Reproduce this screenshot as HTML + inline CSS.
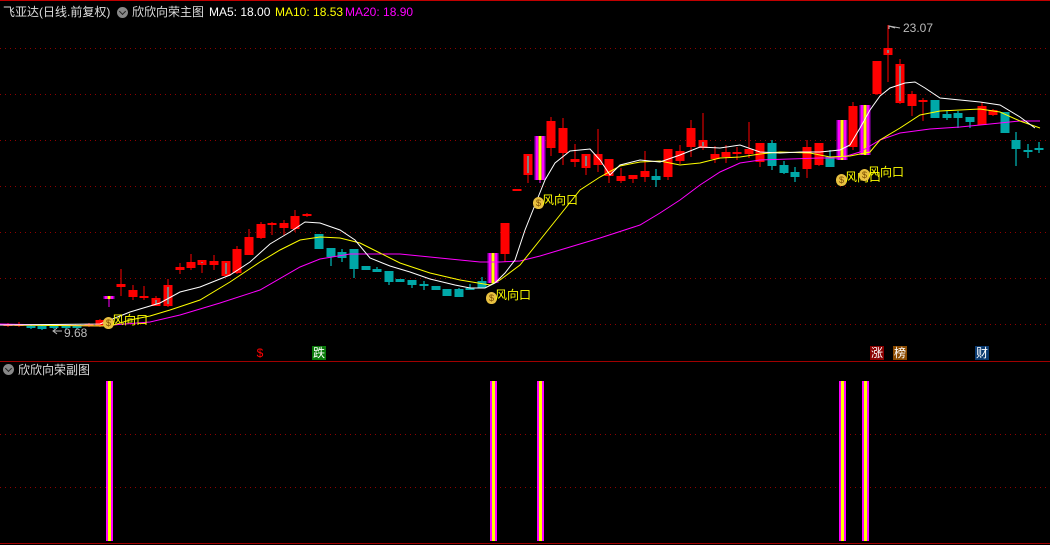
<!DOCTYPE html>
<html><head><meta charset="utf-8"><style>
html,body{margin:0;padding:0;background:#000;width:1050px;height:545px;overflow:hidden}
body{position:relative;font-family:"Liberation Sans","Noto Sans CJK SC",sans-serif}
.t{position:absolute;font-size:12px;line-height:14px;white-space:nowrap}
.ic{position:absolute;width:11px;height:11px;border-radius:50%;background:#888}
.ic:after{content:"";position:absolute;left:3px;top:2px;width:4px;height:4px;border-right:1.5px solid #222;border-bottom:1.5px solid #222;transform:rotate(45deg)}
.fx{position:absolute;font-size:12px;color:#ff0;line-height:13px;white-space:nowrap}
.bag{display:inline-block;width:11px;height:12px;border-radius:50% 50% 45% 45%;background:#e8c040;color:#7a4b00;font-size:9px;text-align:center;line-height:13px;vertical-align:-2px;margin-right:-2px}
.mk{position:absolute;font-size:12px;line-height:14px;width:14px;text-align:center}
</style></head><body>
<svg id="s" width="1050" height="545" style="position:absolute;left:0;top:0">
<line x1="0" y1="0.5" x2="1050" y2="0.5" stroke="#c00000"/>
<line x1="0" y1="361.5" x2="1050" y2="361.5" stroke="#a00000"/>
<line x1="0" y1="543.5" x2="1050" y2="543.5" stroke="#a00000"/>
<g stroke="#900000" stroke-dasharray="1 4">
<line x1="0" y1="48.5" x2="1050" y2="48.5"/><line x1="0" y1="94.5" x2="1050" y2="94.5"/>
<line x1="0" y1="140.5" x2="1050" y2="140.5"/><line x1="0" y1="186.5" x2="1050" y2="186.5"/>
<line x1="0" y1="232.5" x2="1050" y2="232.5"/><line x1="0" y1="278.5" x2="1050" y2="278.5"/>
<line x1="0" y1="324.5" x2="1050" y2="324.5"/>
<line x1="0" y1="434.5" x2="1050" y2="434.5"/><line x1="0" y1="487.5" x2="1050" y2="487.5"/>
</g>
<g id="c"></g>
<polyline fill="none" stroke="#ff00ff" stroke-width="1" points="0,324 100,326 150,322 180,315 220,303 260,290 300,267 320,259 350,254 400,254 440,258 480,262 500,262 520,261 540,256 560,250 600,238 640,225 660,213 680,200 700,185 720,172 740,163 760,160 790,159 820,158 840,158 860,152 880,140 900,133 930,129 960,127 990,124 1020,121 1040,121"/>
<polyline fill="none" stroke="#ffff00" stroke-width="1" points="0,325 110,326 130,320 150,316 170,310 200,300 230,282 260,262 280,250 300,240 320,237 340,238 360,243 380,253 400,263 430,273 460,280 490,285 500,280 520,265 540,240 560,215 580,190 600,177 620,166 640,162 660,161 680,165 700,163 720,158 740,157 760,154 780,152 810,153 830,157 850,156 870,152 880,140 900,128 920,115 940,111 960,110 980,109 1000,112 1020,121 1040,128"/>
<polyline fill="none" stroke="#ffffff" stroke-width="1" points="0,325 100,324 115,318 130,312 160,303 180,292 200,287 230,275 250,262 270,244 290,232 305,222 320,223 340,230 355,240 370,258 390,266 410,272 430,279 455,285 470,288 485,288 495,283 505,273 515,260 525,230 535,205 545,180 555,163 570,151 590,149 600,160 610,175 620,165 640,160 660,162 680,155 700,147 720,148 740,145 760,152 780,153 800,152 820,152 840,150 850,145 860,128 870,110 880,96 890,88 905,83 915,82 925,88 940,98 960,100 980,102 1000,105 1020,117 1035,128"/>
<g>
<rect x="106" y="381" width="2" height="160" fill="#f0f"/><rect x="108" y="381" width="3" height="160" fill="#ff0"/><rect x="111" y="381" width="2" height="160" fill="#f0f"/>
<rect x="490" y="381" width="2" height="160" fill="#f0f"/><rect x="492" y="381" width="3" height="160" fill="#ff0"/><rect x="495" y="381" width="2" height="160" fill="#f0f"/>
<rect x="537" y="381" width="2" height="160" fill="#f0f"/><rect x="539" y="381" width="3" height="160" fill="#ff0"/><rect x="542" y="381" width="2" height="160" fill="#f0f"/>
<rect x="839" y="381" width="2" height="160" fill="#f0f"/><rect x="841" y="381" width="3" height="160" fill="#ff0"/><rect x="844" y="381" width="2" height="160" fill="#f0f"/>
<rect x="862" y="381" width="2" height="160" fill="#f0f"/><rect x="864" y="381" width="3" height="160" fill="#ff0"/><rect x="867" y="381" width="2" height="160" fill="#f0f"/>
</g>
<polyline points="895,28 889,26 889,29" fill="none" stroke="#bbb"/>
<line x1="889" y1="26" x2="900" y2="28" stroke="#bbb"/>
<line x1="54" y1="331" x2="62" y2="331" stroke="#bbb"/><polyline points="57,328 53,331 57,334" fill="none" stroke="#bbb"/>
</svg>
<div class="t" style="left:3px;top:5px;color:#ddd">飞亚达(日线.前复权)</div>
<div class="ic" style="left:117px;top:7px"></div>
<div class="t" style="left:132px;top:5px;color:#ddd">欣欣向荣主图</div>
<div class="t" style="left:209px;top:5px;color:#fff">MA5: 18.00</div>
<div class="t" style="left:275px;top:5px;color:#ff0">MA10: 18.53</div>
<div class="t" style="left:345px;top:5px;color:#f0f">MA20: 18.90</div>
<div class="t" style="left:903px;top:21px;color:#bbb">23.07</div>
<div class="t" style="left:64px;top:326px;color:#bbb">9.68</div>
<div class="fx" style="left:103px;top:314px"><span class="bag">$</span>风向口</div>
<div class="fx" style="left:486px;top:289px"><span class="bag">$</span>风向口</div>
<div class="fx" style="left:533px;top:194px"><span class="bag">$</span>风向口</div>
<div class="fx" style="left:836px;top:171px"><span class="bag">$</span>风向口</div>
<div class="fx" style="left:859px;top:166px"><span class="bag">$</span>风向口</div>
<div class="mk" style="left:253px;top:346px;color:#f00">$</div>
<div class="mk" style="left:312px;top:346px;color:#fff;background:#0a7a0a">跌</div>
<div class="mk" style="left:870px;top:346px;color:#fff;background:#8a0000">涨</div>
<div class="mk" style="left:893px;top:346px;color:#fff;background:#8a4a00">榜</div>
<div class="mk" style="left:975px;top:346px;color:#fff;background:#0a3a70">财</div>
<div class="ic" style="left:3px;top:364px"></div>
<div class="t" style="left:18px;top:363px;color:#ddd">欣欣向荣副图</div>
<script>
var d=[
[8,'r',324,326,323,327],[19,'r',324,326,322,327],[31,'c',326,328,325,329],[42,'c',326,329,325,330],[54,'c',326,328,325,329],[66,'c',326,328,325,329],[77,'c',326,328,325,329],[89,'r',324,326,323,327],[100,'r',320,326,319,327],
[109,'p',296,299,296,307],[121,'r',284,287,269,296],[133,'r',290,297,285,300],[144,'r',296,298,286,300],[156,'rc',298,306,296,306],[168,'rc',285,306,279,307],[180,'r',267,270,263,274],[191,'r',262,268,254,270],[202,'rc',260,265,260,273],[214,'r',261,265,255,270],[226,'rc',261,276,261,277],[237,'r',249,273,246,274],[249,'r',237,255,229,255],[261,'r',224,238,222,239],[272,'r',223,225,222,235],[284,'r',223,228,220,235],[295,'r',216,229,210,232],[307,'r',214,216,213,217],
[319,'c',234,249,234,249],[331,'c',248,257,248,266],[342,'c',252,258,249,262],[354,'c',249,269,249,278],[366,'c',266,270,266,270],[377,'c',269,272,267,272],[389,'c',271,282,271,285],[400,'c',279,282,279,282],[412,'c',280,285,280,288],[424,'c',284,286,281,290],[436,'c',286,290,286,290],[447,'c',289,296,289,296],[459,'c',289,297,288,297],[470,'c',288,290,284,290],[482,'c',281,288,277,288],
[493,'p',253,283,253,283],[505,'r',223,254,223,262],[517,'r',189,191,189,191],[528,'rc',154,175,154,183],[540,'p',136,180,136,183],[551,'r',121,148,117,156],[563,'r',128,153,118,165],[575,'r',159,162,144,167],[586,'rc',154,168,154,175],[598,'r',154,165,129,172],[609,'r',159,176,159,183],[621,'r',176,181,168,183],[633,'r',175,179,175,183],[645,'r',171,177,151,182],[656,'c',176,180,169,187],[668,'r',149,177,149,180],[680,'r',151,161,145,164],[691,'r',128,147,120,157],[703,'rc',140,148,113,150],[715,'r',154,159,146,163],[726,'r',152,157,145,163],[737,'r',152,154,147,160],[749,'r',149,154,122,158],[760,'r',143,162,143,167],[772,'c',143,166,140,170],[784,'c',165,173,161,174],[795,'c',172,177,167,182],[807,'r',147,169,140,178],[819,'r',143,165,143,166],[830,'c',157,167,150,167],
[842,'p',120,160,120,160],[853,'r',106,147,102,150],[865,'p',105,155,105,155],[877,'r',61,94,61,95],[888,'rc',48,55,25,82],[900,'rc',64,103,59,104],[912,'r',94,106,91,116],[923,'r',100,102,98,121],[935,'c',100,118,100,118],[947,'c',114,118,111,120],[958,'c',113,118,111,128],[970,'c',117,122,117,128],[982,'r',106,125,102,125],[993,'r',110,115,109,116],[1005,'c',112,133,112,133],[1016,'c',140,149,132,166],[1028,'c',150,152,144,158],[1039,'c',148,150,142,153]];
var h='';
d.forEach(function(a){var x=a[0],t=a[1],o=a[2],c=a[3],hi=a[4],lo=a[5],w=9,L=x-4.5;
var bh=Math.max(2,c-o);
if(t=='p'){h+='<line x1="'+x+'" y1="'+hi+'" x2="'+x+'" y2="'+lo+'" stroke="#f0f"/>';h+='<rect x="'+(x-5.5)+'" y="'+o+'" width="11" height="'+bh+'" fill="#a000c0"/><rect x="'+(x-4)+'" y="'+o+'" width="2" height="'+bh+'" fill="#f0f"/><rect x="'+(x-1.5)+'" y="'+o+'" width="3" height="'+bh+'" fill="#ff0"/><rect x="'+(x+2)+'" y="'+o+'" width="2" height="'+bh+'" fill="#f0f"/>';return;}
var col=t=='c'?'#00a8a8':'#f00',wc=t=='c'?'#00e0e0':'#f00';
h+='<line x1="'+x+'" y1="'+hi+'" x2="'+x+'" y2="'+lo+'" stroke="'+wc+'"/>';
h+='<rect x="'+L+'" y="'+o+'" width="'+w+'" height="'+bh+'" fill="'+col+'"/>';
if(t=='rc')h+='<line x1="'+x+'" y1="'+(o+2)+'" x2="'+x+'" y2="'+(c-2)+'" stroke="#0ff"/>';
});
document.getElementById('c').innerHTML=h;
</script>
</body></html>
